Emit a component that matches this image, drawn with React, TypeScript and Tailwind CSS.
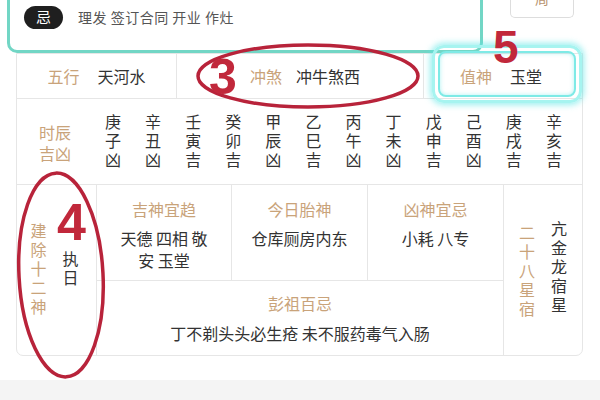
const cjk = { fontFamily: '"Noto Sans CJK SC", "Noto Sans", sans-serif' };

const hours = ["庚子凶", "辛丑凶", "壬寅吉", "癸卯吉", "甲辰凶", "乙巳吉", "丙午凶", "丁未凶", "戊申吉", "己酉凶", "庚戌吉", "辛亥吉"];

const Vertical = ({ text, className }: { text: string; className: string }) => (
  <div className={`[writing-mode:vertical-rl] tracking-[3px] leading-[20px] ${className}`}>{text}</div>
);

const App = () => {
  return (
    <div className="relative w-[600px] h-[400px] overflow-hidden bg-white" style={cjk}>
      {/* top card, scrolled partly out of view */}
      <div className="flex h-[53px] items-end">
        <div className="ml-[7px] w-[476px] h-[96px] rounded-[10px] border-[3px] border-[#72d6c5] flex items-end pb-[21px] pl-[14px] gap-[15px]">
          <span className="w-[39px] h-[23px] rounded-full bg-[#1f1f1f] text-white text-[15px] flex items-center justify-center">
            忌
          </span>
          <span className="text-[14px] leading-[23px] text-[#555] tracking-[0.5px]">理发 签订合同 开业 作灶</span>
        </div>
        <div className="self-start ml-[27px] w-[64px] h-[18px] rounded-b-[5px] border border-t-0 border-[#ddd] overflow-hidden flex justify-center">
          <span className="text-[14px] leading-[14px] text-[#b89470] -mt-[9px]">周</span>
        </div>
      </div>

      {/* table */}
      <div className="ml-[16px] w-[567px] border border-[#e6e6e6] rounded-b-[7px] text-[#333]">
        <div className="flex h-[45px] border-b border-[#e6e6e6] text-[16px]">
          <div className="w-[160px] border-r border-[#e6e6e6] flex items-center justify-center gap-[18px]">
            <span className="text-[#c9a37a]">五行</span>
            <span>天河水</span>
          </div>
          <div className="w-[247px] border-r border-[#e6e6e6] flex items-center justify-center gap-[14px] pl-[10px]">
            <span className="text-[#c9a37a]">冲煞</span>
            <span>冲牛煞西</span>
          </div>
          <div className="flex-1 flex items-center justify-center gap-[18px] pr-[4px]">
            <span className="text-[#c9a37a]">值神</span>
            <span>玉堂</span>
          </div>
        </div>

        <div className="flex h-[86px] border-b border-[#e6e6e6] items-center">
          <div className="w-[76px] text-center text-[16px] leading-[21px] text-[#c9a37a] pt-[2px]">
            时辰
            <br />
            吉凶
          </div>
          <div className="grid grid-cols-12 w-[481px] justify-items-center pt-[2px]">
            {hours.map((h, i) => (
              <Vertical key={i} text={h} className="text-[16px] text-[#333]" />
            ))}
          </div>
        </div>

        <div className="flex h-[170px]">
          <div className="w-[80px] border-r border-[#e6e6e6] flex items-start justify-center gap-[12px] pt-[38px] pr-[4px]">
            <Vertical text="建除十二神" className="text-[16px] text-[#c9a37a]" />
            <Vertical text="执日" className="text-[16px] text-[#333] mt-[28px]" />
          </div>
          <div className="w-[406px] flex flex-col">
            <div className="h-[96px] flex border-b border-[#e6e6e6]">
              <div className="w-[135px] border-r border-[#e6e6e6] flex flex-col items-center pt-[12px]">
                <span className="text-[16px] text-[#c9a37a] mb-[6px]">吉神宜趋</span>
                <span className="text-[16px] leading-[22px] text-center">
                  天德 四相 敬
                  <br />
                  安 玉堂
                </span>
              </div>
              <div className="w-[136px] border-r border-[#e6e6e6] flex flex-col items-center pt-[12px]">
                <span className="text-[16px] text-[#c9a37a] mb-[6px]">今日胎神</span>
                <span className="text-[16px] leading-[22px]">仓库厕房内东</span>
              </div>
              <div className="flex-1 flex flex-col items-center pt-[12px]">
                <span className="text-[16px] text-[#c9a37a] mb-[6px]">凶神宜忌</span>
                <span className="text-[16px] leading-[22px]">小耗 八专</span>
              </div>
            </div>
            <div className="flex-1 flex flex-col items-center pt-[10px]">
              <span className="text-[16px] text-[#c9a37a] mb-[6px]">彭祖百忌</span>
              <span className="text-[16px]">丁不剃头头必生疮 未不服药毒气入肠</span>
            </div>
          </div>
          <div className="flex-1 border-l border-[#e6e6e6] flex items-start justify-center gap-[12px] pt-[36px]">
            <Vertical text="二十八星宿" className="text-[16px] text-[#c9a37a] mt-[4px]" />
            <Vertical text="亢金龙宿星" className="text-[16px] text-[#333]" />
          </div>
        </div>
      </div>

      <div className="mt-[24px] h-[20px] bg-[#f4f4f4]" />

      {/* annotations */}
      <div className="absolute left-[432px] top-[45px] w-[150px] h-[58px] rounded-[12px] border-[3px] border-[#a6f4f0] shadow-[0_0_6px_2px_rgba(90,230,230,0.6)] p-[3px]">
        <div className="w-full h-full rounded-[8px] border-2 border-[#7eeae6] shadow-[inset_0_0_4px_rgba(90,230,230,0.5)]" />
      </div>
      <svg className="absolute left-0 top-0 pointer-events-none" width="600" height="400">
        <ellipse cx="308" cy="76" rx="110" ry="31" fill="none" stroke="#b8233a" strokeWidth="3.5" />
        <ellipse cx="61" cy="275" rx="42" ry="102" fill="none" stroke="#b8233a" strokeWidth="3.5" transform="rotate(-3 61 275)" />
      </svg>
      <span className="absolute left-[209px] top-[52px] text-[50px] leading-[50px] font-bold text-[#c1283b]" style={{ fontFamily: '"Liberation Sans", Arial, sans-serif' }}>
        3
      </span>
      <span className="absolute left-[57px] top-[196px] text-[52px] leading-[52px] font-bold text-[#c1283b]" style={{ fontFamily: '"Liberation Sans", Arial, sans-serif' }}>
        4
      </span>
      <span className="absolute left-[493px] top-[24px] text-[46px] leading-[46px] font-bold text-[#c1283b]" style={{ fontFamily: '"Liberation Sans", Arial, sans-serif' }}>
        5
      </span>
    </div>
  );
};

export default App;
